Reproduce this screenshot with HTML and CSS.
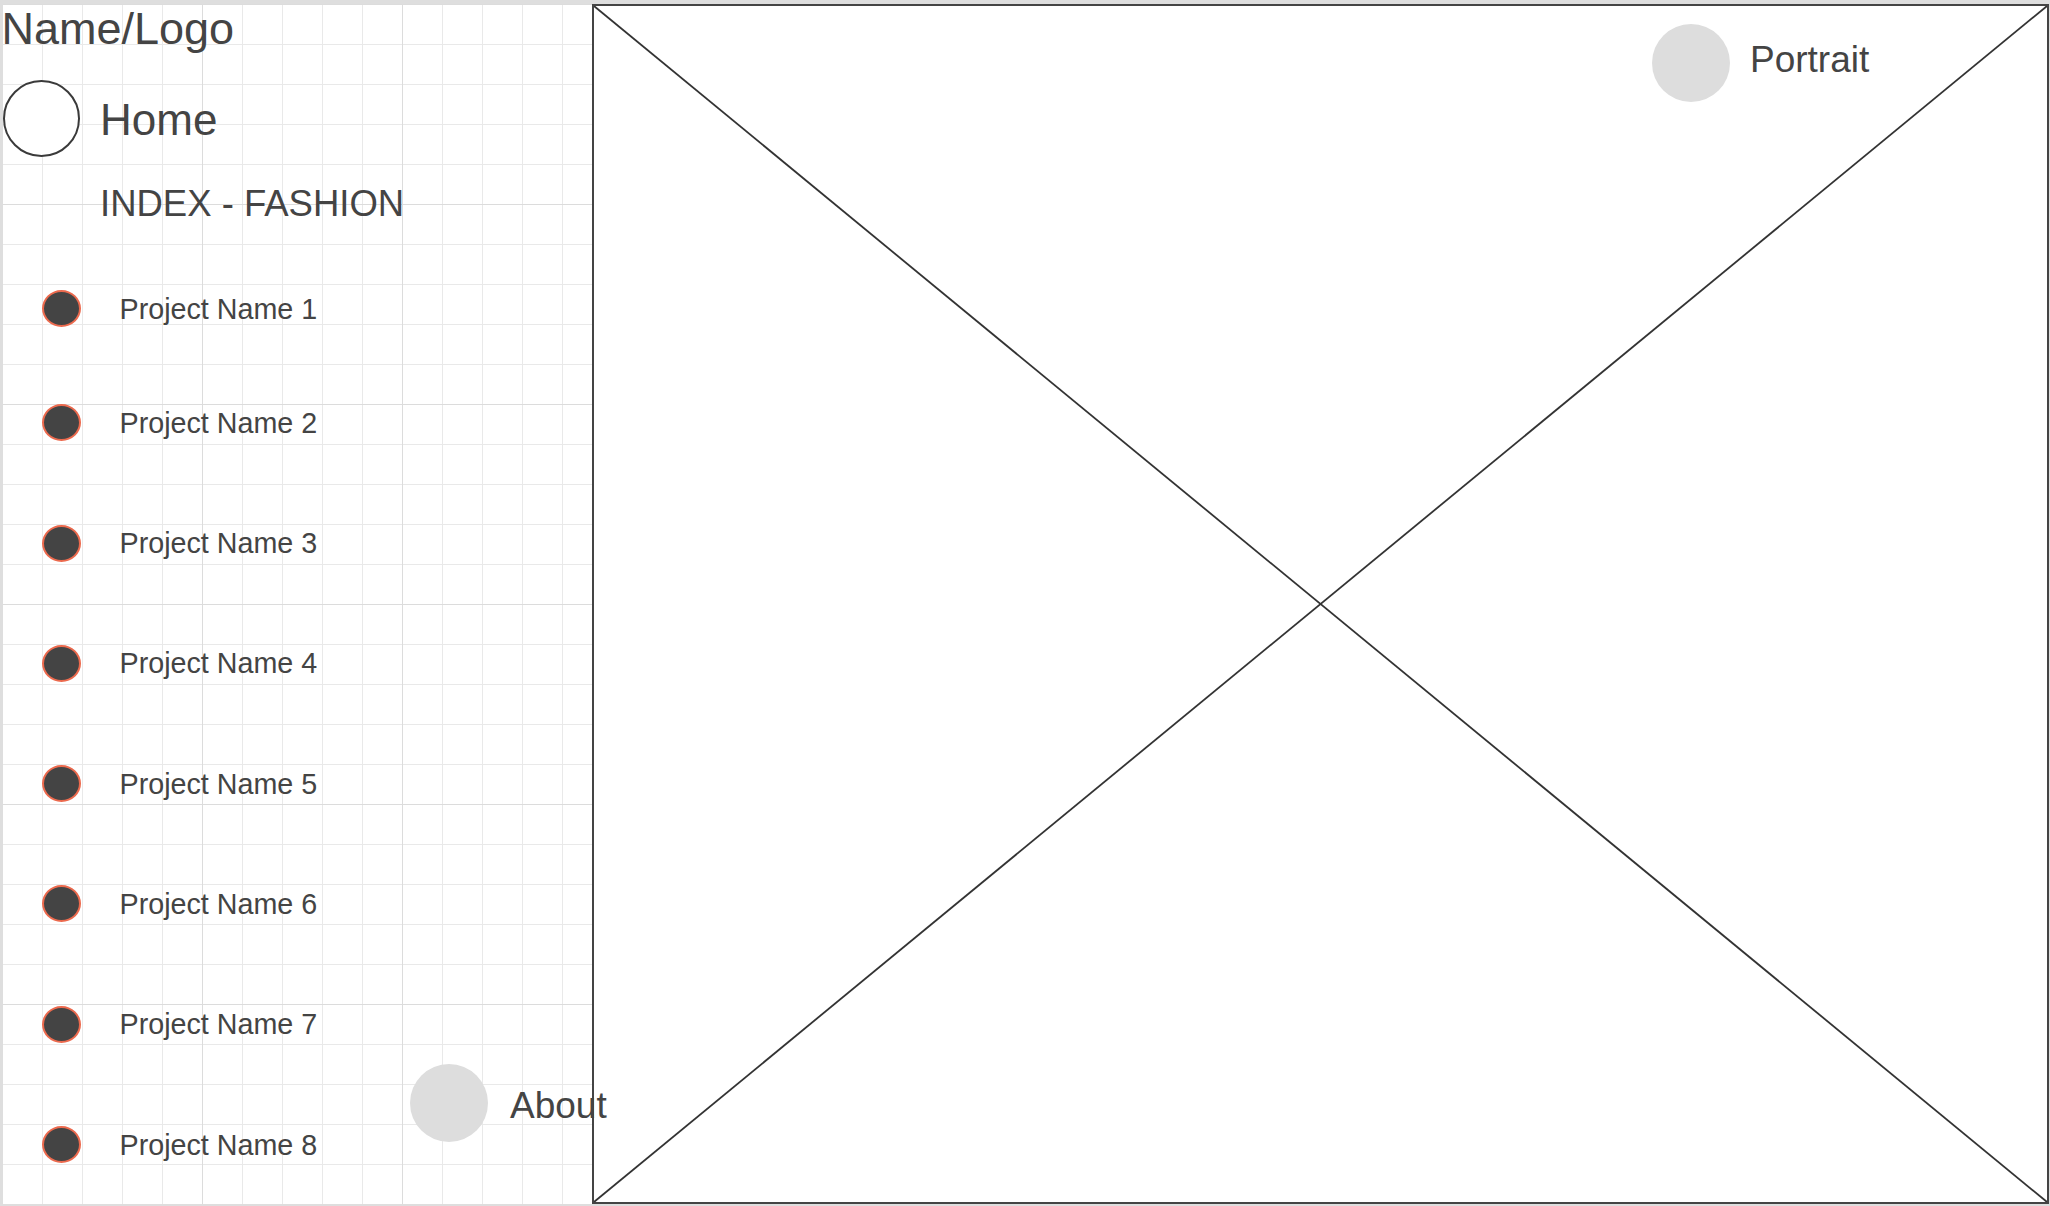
FILE: index.html
```html
<!DOCTYPE html>
<html lang="en">
<head>
<meta charset="utf-8">
<title>Portfolio wireframe</title>
<link rel="stylesheet" href="styles.css">
</head>
<body>
<div class="page">
  <aside class="sidebar">
    <div class="brand">Name/Logo</div>
    <div class="home">
      <span class="ring"></span>
      <span class="home-label">Home</span>
    </div>
    <div class="section">INDEX - FASHION</div>
    <ul class="projects">
      <li class="project"><span class="dot"></span><span class="project-label">Project Name 1</span></li>
      <li class="project"><span class="dot"></span><span class="project-label">Project Name 2</span></li>
      <li class="project"><span class="dot"></span><span class="project-label">Project Name 3</span></li>
      <li class="project"><span class="dot"></span><span class="project-label">Project Name 4</span></li>
      <li class="project"><span class="dot"></span><span class="project-label">Project Name 5</span></li>
      <li class="project"><span class="dot"></span><span class="project-label">Project Name 6</span></li>
      <li class="project"><span class="dot"></span><span class="project-label">Project Name 7</span></li>
      <li class="project"><span class="dot"></span><span class="project-label">Project Name 8</span></li>
    </ul>
    <div class="about">
      <span class="disc"></span>
      <span class="about-label">About</span>
    </div>
  </aside>
  <main class="viewer">
    <svg class="cross" viewBox="0 0 100 100" preserveAspectRatio="none" aria-hidden="true">
      <line x1="0" y1="0" x2="100" y2="100" vector-effect="non-scaling-stroke"/>
      <line x1="100" y1="0" x2="0" y2="100" vector-effect="non-scaling-stroke"/>
    </svg>
    <div class="portrait">
      <span class="disc"></span>
      <span class="portrait-label">Portrait</span>
    </div>
  </main>
</div>
</body>
</html>
```

FILE: styles.css
```css
html, body {
  margin: 0;
  padding: 0;
}

body {
  background: #dedede;
  font-family: "Liberation Sans", Arial, sans-serif;
  color: #444;
}

.page {
  display: flex;
  width: 2050px;
  height: 1206px;
  box-sizing: border-box;
  padding: 4px 1px 2px 3px;
}

.sidebar {
  position: relative;
  flex: 0 0 589px;
  background-color: #fff;
  background-image:
    linear-gradient(to right, #dcdcdc 1px, transparent 1px),
    linear-gradient(to bottom, #dcdcdc 1px, transparent 1px),
    linear-gradient(to right, #e9e9e9 1px, transparent 1px),
    linear-gradient(to bottom, #e9e9e9 1px, transparent 1px);
  background-size: 200px 100%, 100% 200px, 40px 100%, 100% 40px;
  background-position: 199px 0, 0 200px, 39px 0, 0 40px;
}

.brand {
  margin: 3px 0 0 -1.5px;
  font-size: 45px;
  line-height: 44px;
  white-space: nowrap;
}

.home {
  display: flex;
  align-items: center;
  margin-top: 29px;
}

.ring {
  width: 77px;
  height: 77px;
  box-sizing: border-box;
  border: 2px solid #3a3a3a;
  border-radius: 50%;
  background: #fff;
  flex-shrink: 0;
}

.home-label {
  margin-left: 20px;
  padding-top: 2px;
  font-size: 44px;
  line-height: 43px;
}

.section {
  margin: 29px 0 0 97px;
  font-size: 36.5px;
  line-height: 36px;
  white-space: nowrap;
}

.projects {
  list-style: none;
  margin: 68px 0 0 0;
  padding: 0;
  display: flex;
  flex-direction: column;
  gap: 83.3px;
}

.project {
  display: flex;
  align-items: center;
  height: 37px;
}

.project:first-child {
  margin-bottom: -6px;
}

.dot {
  width: 39px;
  height: 37px;
  box-sizing: border-box;
  margin-left: 39px;
  border: 2px solid #ec6a4e;
  border-radius: 50%;
  background: #444;
  flex-shrink: 0;
}

.project-label {
  margin-left: 38.5px;
  font-size: 28.7px;
  line-height: 28px;
  white-space: nowrap;
}

.disc {
  width: 78px;
  height: 78px;
  border-radius: 50%;
  background: #dddddd;
  flex-shrink: 0;
}

.about {
  position: absolute;
  left: 407px;
  top: 1060px;
  z-index: 1;
  display: flex;
  align-items: center;
}

.about-label {
  margin-left: 22px;
  padding-top: 5px;
  font-size: 37px;
  line-height: 36px;
  white-space: nowrap;
}

.viewer {
  position: relative;
  flex: 1 1 auto;
  box-sizing: border-box;
  border: 2px solid #444;
  background: #fff;
}

.cross {
  position: absolute;
  inset: 0;
  width: 100%;
  height: 100%;
  display: block;
}

.cross line {
  stroke: #333;
  stroke-width: 1.8;
}

.portrait {
  position: relative;
  display: flex;
  align-items: center;
  margin: 18px 0 0 1058px;
}

.portrait-label {
  margin-left: 20px;
  padding-bottom: 6px;
  font-size: 37px;
  line-height: 36px;
  white-space: nowrap;
}
```
